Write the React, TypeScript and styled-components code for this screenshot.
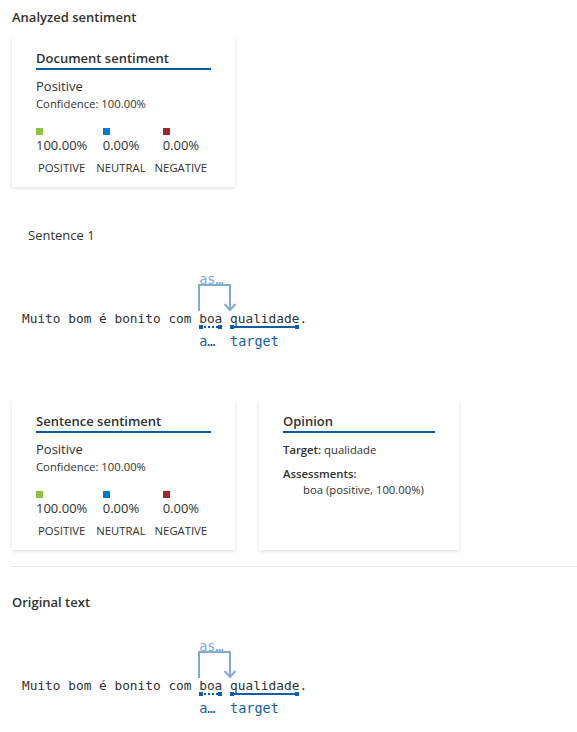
import React from 'react';
import styled, { createGlobalStyle } from 'styled-components';

const GlobalStyle = createGlobalStyle`
  html, body { margin: 0; padding: 0; background: #ffffff; }
  body {
    font-family: "Open Sans", "Noto Sans", sans-serif;
    color: #323130;
  }
`;

const Page = styled.div`
  display: flex;
  flex-direction: column;
  align-items: flex-start;
  padding: 7px 0 20px 12px;
`;

const SectionTitle = styled.h2<{ $top?: number }>`
  margin: ${(p) => p.$top ?? 0}px 0 0 0;
  font-size: 13px;
  line-height: 20px;
  font-weight: 600;
  color: #323130;
`;

const SentenceLabel = styled.div`
  margin: 38px 0 0 16px;
  font-size: 13px;
  line-height: 20px;
  color: #323130;
`;

const Card = styled.div<{ $width: number; $top?: number }>`
  box-sizing: border-box;
  width: ${(p) => p.$width}px;
  height: 151px;
  margin-top: ${(p) => p.$top ?? 0}px;
  padding: 12px 24px 11px;
  background: #ffffff;
  box-shadow: 0 1.6px 3.6px 0 rgba(0, 0, 0, 0.132), 0 0.3px 0.9px 0 rgba(0, 0, 0, 0.108);
  display: flex;
  flex-direction: column;
  align-items: stretch;
`;

const CardTitle = styled.div`
  font-size: 13px;
  line-height: 20px;
  font-weight: 600;
  color: #323130;
  border-bottom: 2px solid #005a9e;
`;

const Verdict = styled.div`
  margin-top: 6px;
  font-size: 13px;
  line-height: 20px;
`;

const SmallText = styled.div<{ $top?: number; $indent?: number }>`
  margin-top: ${(p) => p.$top ?? 0}px;
  padding-left: ${(p) => p.$indent ?? 0}px;
  font-size: 11.3px;
  line-height: 16px;
  color: #323130;
`;

const Strong = styled.span`
  font-weight: 600;
`;

const ScoreRow = styled.div`
  display: flex;
  gap: 9px;
  margin-top: 16px;
`;

const ScoreColumn = styled.div`
  display: flex;
  flex-direction: column;
  align-items: center;
`;

const ScoreValue = styled.div`
  display: flex;
  flex-direction: column;
  align-items: flex-start;
  font-size: 13px;
  line-height: 20px;
`;

const Swatch = styled.span<{ $color: string }>`
  display: block;
  width: 7px;
  height: 7px;
  background: ${(p) => p.$color};
`;

const ScoreLabel = styled.div`
  margin-top: 5px;
  font-size: 11.3px;
  line-height: 16px;
  text-transform: uppercase;
`;

const CardRow = styled.div`
  display: flex;
  gap: 24px;
  margin-top: 50px;
`;

const Divider = styled.hr`
  align-self: stretch;
  margin: 16px 0 0 0;
  border: none;
  height: 1px;
  background: #e6e6e6;
`;

const SentenceLine = styled.div`
  margin-top: 64px;
  padding: 0 0 20px 10px;
  font-family: "DejaVu Sans Mono", "Liberation Mono", monospace;
  font-size: 12.8px;
  line-height: 20px;
  white-space: pre;
  color: #323130;
`;

const Token = styled.span`
  position: relative;
  display: inline-block;
`;

const RelationArrow = styled.svg`
  position: absolute;
  left: -2px;
  top: -27px;
  overflow: visible;
  fill: none;
  stroke: #80aad4;
  stroke-width: 2;
`;

const AnnotationLabel = styled.span<{ $light?: boolean }>`
  position: absolute;
  left: 0;
  font-family: "DejaVu Sans Mono", "Liberation Mono", monospace;
  font-size: 13.5px;
  line-height: 16px;
  white-space: nowrap;
  color: ${(p) => (p.$light ? '#80aad4' : '#0f5ea8')};
`;

const TopLabel = styled(AnnotationLabel)`
  top: -38px;
`;

const BottomLabel = styled(AnnotationLabel)`
  top: 24px;
`;

const Underline = styled.span<{ $dotted?: boolean }>`
  position: absolute;
  left: 0;
  right: 0;
  top: 17px;
  height: 0;
  border-top: 2px ${(p) => (p.$dotted ? 'dotted' : 'solid')} #0f5ea8;
  &::before,
  &::after {
    content: '';
    position: absolute;
    top: -3px;
    width: 4px;
    height: 4px;
    background: #0f5ea8;
  }
  &::before { left: 0; }
  &::after { right: 0; }
`;

type Score = { name: string; value: string; color: string };

const scores: Score[] = [
  { name: 'Positive', value: '100.00%', color: '#92c13e' },
  { name: 'Neutral', value: '0.00%', color: '#0078d4' },
  { name: 'Negative', value: '0.00%', color: '#a4262c' },
];

const SentimentCard: React.FC<{ title: string; top?: number }> = ({ title, top }) => (
  <Card $width={223} $top={top}>
    <CardTitle>{title}</CardTitle>
    <Verdict>Positive</Verdict>
    <SmallText>Confidence: 100.00%</SmallText>
    <ScoreRow>
      {scores.map((s) => (
        <ScoreColumn key={s.name}>
          <ScoreValue>
            <Swatch $color={s.color} />
            {s.value}
          </ScoreValue>
          <ScoreLabel>{s.name}</ScoreLabel>
        </ScoreColumn>
      ))}
    </ScoreRow>
  </Card>
);

const AnnotatedSentence: React.FC = () => (
  <SentenceLine>
    {'Muito bom é bonito com '}
    <Token>
      boa
      <RelationArrow width="42" height="31" viewBox="0 0 42 31">
        <path d="M2 29 V3 H33 V28" />
        <path d="M27.5 22 L33 28 L38.5 22" />
      </RelationArrow>
      <TopLabel $light>as…</TopLabel>
      <Underline $dotted />
      <BottomLabel>a…</BottomLabel>
    </Token>
    {' '}
    <Token>
      qualidade
      <Underline />
      <BottomLabel>target</BottomLabel>
    </Token>
    .
  </SentenceLine>
);

export default function App() {
  return (
    <>
      <GlobalStyle />
      <Page>
        <SectionTitle>Analyzed sentiment</SectionTitle>
        <SentimentCard title="Document sentiment" top={9} />
        <SentenceLabel>Sentence 1</SentenceLabel>
        <AnnotatedSentence />
        <CardRow>
          <SentimentCard title="Sentence sentiment" />
          <Card $width={200}>
            <CardTitle>Opinion</CardTitle>
            <SmallText $top={9}>
              <Strong>Target:</Strong> qualidade
            </SmallText>
            <SmallText $top={8}>
              <Strong>Assessments:</Strong>
            </SmallText>
            <SmallText $indent={20}>boa (positive, 100.00%)</SmallText>
          </Card>
        </CardRow>
        <Divider />
        <SectionTitle $top={25}>Original text</SectionTitle>
        <AnnotatedSentence />
      </Page>
    </>
  );
}
